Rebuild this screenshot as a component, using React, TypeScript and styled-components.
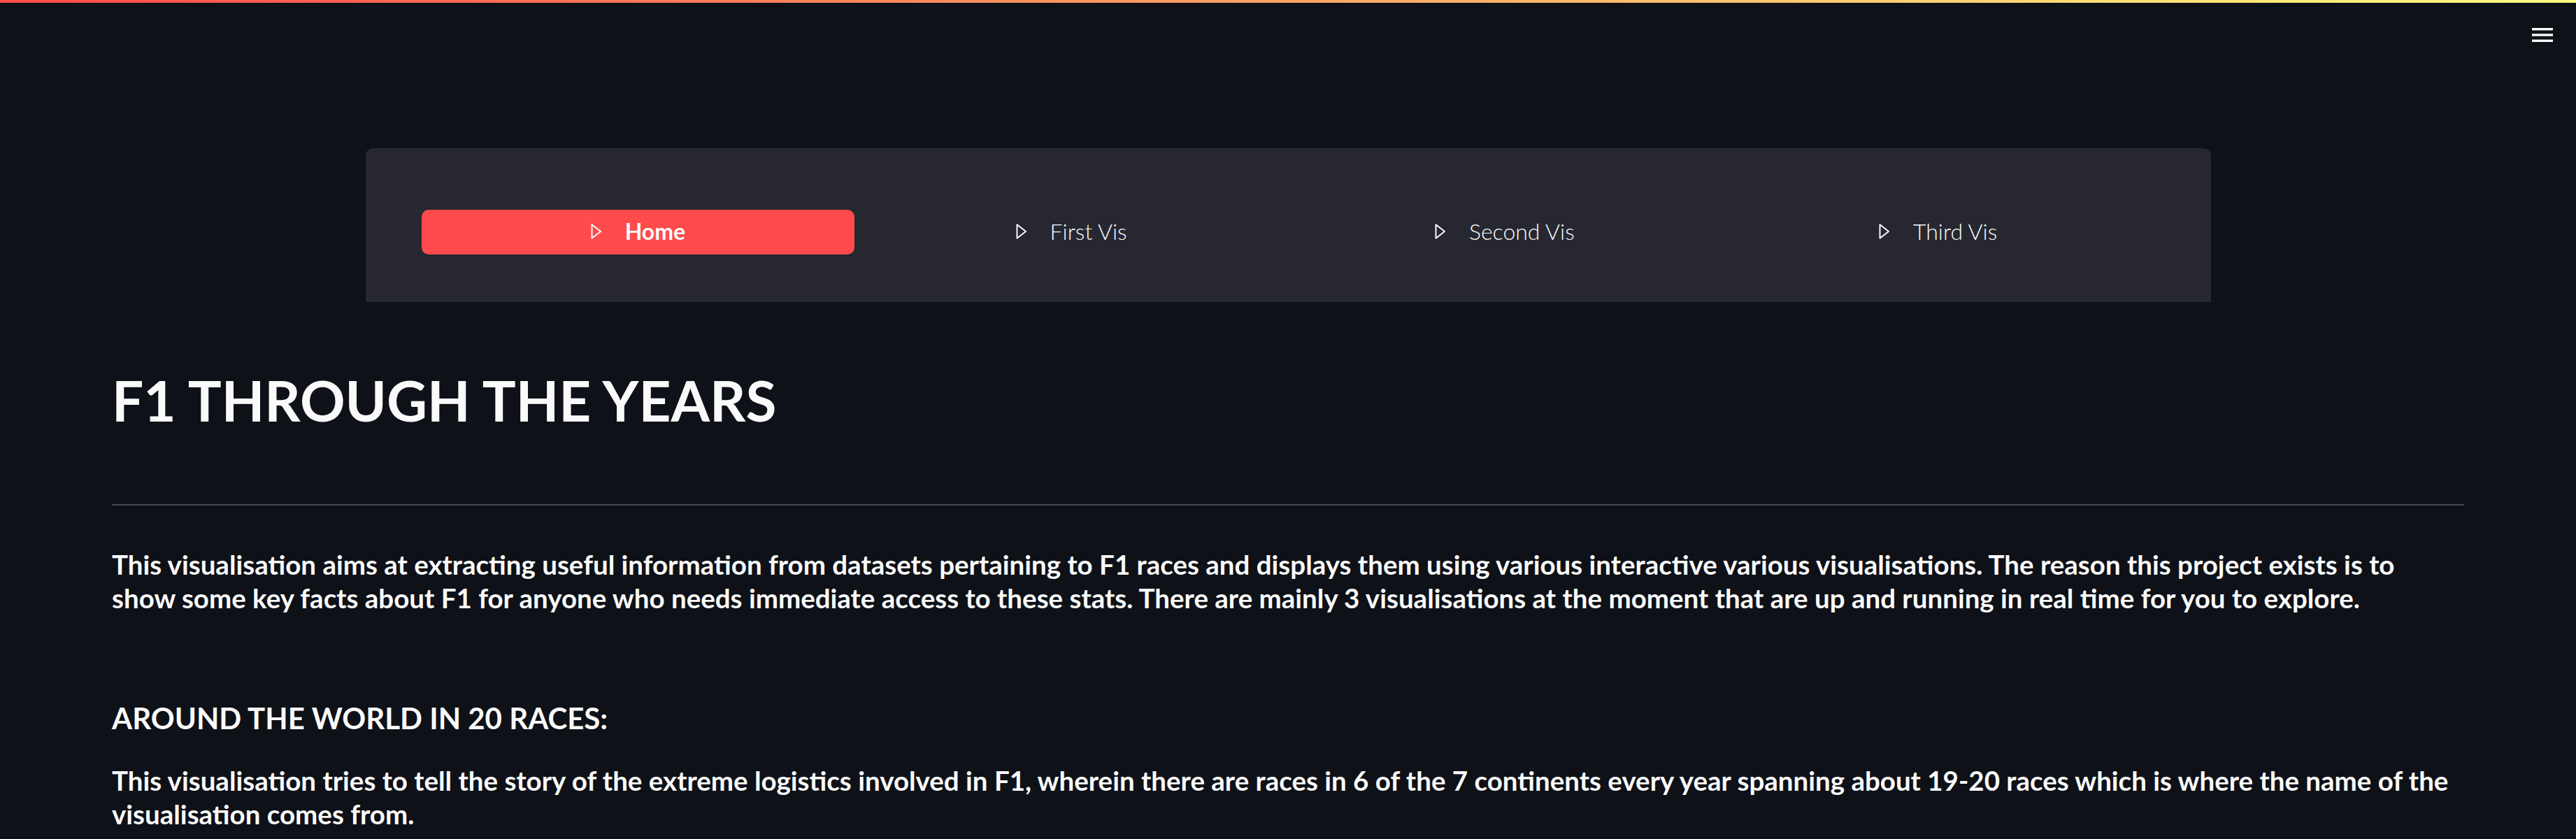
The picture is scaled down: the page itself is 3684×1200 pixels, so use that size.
import React from "react";
import styled, { createGlobalStyle } from "styled-components";

const GlobalStyle = createGlobalStyle`
  html, body {
    margin: 0;
    padding: 0;
    background: #0e1117;
  }
  * { box-sizing: border-box; }
`;

const Page = styled.div`
  min-height: 1200px;
  background: #0e1117;
  color: #fafafa;
  font-family: Lato, "Noto Sans", sans-serif;
`;

const DecorBar = styled.div`
  height: 4px;
  background: linear-gradient(90deg, rgb(255, 75, 75), rgb(255, 253, 128));
`;

const Header = styled.header`
  height: 96px;
  display: flex;
  justify-content: flex-end;
  align-items: flex-start;
  padding: 36px 33px 0 0;
`;

const MenuButton = styled.button`
  width: 30px;
  height: 20px;
  padding: 0;
  border: none;
  background: transparent;
  display: flex;
  cursor: pointer;
`;

const Main = styled.main`
  padding: 112px 160px 0;
`;

const Nav = styled.nav`
  width: 2639px;
  margin: 0 auto;
  background: #262730;
  border-radius: 10px 10px 0 0;
  padding: 88px 80px 68px;
  display: grid;
  grid-template-columns: repeat(4, 1fr);
`;

const NavItem = styled.a<{ $active?: boolean }>`
  height: 64px;
  border-radius: 10px;
  display: flex;
  align-items: center;
  justify-content: center;
  gap: 33px;
  padding-bottom: 3px;
  background: ${(p) => (p.$active ? "#ff4b4b" : "transparent")};
  color: #fafafa;
  font-size: 32px;
  font-weight: ${(p) => (p.$active ? 700 : 300)};
  text-decoration: none;
  cursor: pointer;
`;

const Title = styled.h1`
  margin: 92px 0 0;
  font-size: 80px;
  line-height: 1.2;
  font-weight: 700;
  color: #fafafa;
`;

const Divider = styled.hr`
  margin: 101px 0 0;
  border: none;
  height: 2px;
  background: #47484d;
`;

const Paragraph = styled.p<{ $gap: number }>`
  margin: ${(p) => p.$gap}px 0 0;
  font-size: 38.5px;
  line-height: 48px;
  font-weight: 700;
  color: #fafafa;
`;

const SectionHeading = styled.h3`
  margin: 123px 0 0;
  font-size: 42px;
  line-height: 1.2;
  font-weight: 700;
  color: #fafafa;
`;

const PlayIcon = () => (
  <svg width="16" height="24" viewBox="0 0 16 24" fill="none">
    <path
      d="M1.5 2.2 L14 12 L1.5 21.8 Z"
      stroke="#fafafa"
      strokeWidth="2"
      strokeLinejoin="round"
    />
  </svg>
);

const MenuIcon = () => (
  <svg width="30" height="20" viewBox="0 0 30 20">
    <rect x="0" y="0" width="30" height="3.4" fill="#fafafa" />
    <rect x="0" y="8.3" width="30" height="3.4" fill="#fafafa" />
    <rect x="0" y="16.6" width="30" height="3.4" fill="#fafafa" />
  </svg>
);

const items = ["Home", "First Vis", "Second Vis", "Third Vis"];

export default function App() {
  return (
    <>
      <GlobalStyle />
      <Page>
        <DecorBar />
        <Header>
          <MenuButton aria-label="menu">
            <MenuIcon />
          </MenuButton>
        </Header>
        <Main>
          <Nav>
            {items.map((label, i) => (
              <NavItem key={label} $active={i === 0}>
                <PlayIcon />
                <span>{label}</span>
              </NavItem>
            ))}
          </Nav>
          <Title>F1 THROUGH THE YEARS</Title>
          <Divider />
          <Paragraph $gap={60}>
            This visualisation aims at extracting useful information from datasets pertaining to F1 races and
            displays them using various interactive various visualisations. The reason this project exists is to
            <br />
            show some key facts about F1 for anyone who needs immediate access to these stats. There are mainly 3
            visualisations at the moment that are up and running in real time for you to explore.
          </Paragraph>
          <SectionHeading>AROUND THE WORLD IN 20 RACES:</SectionHeading>
          <Paragraph $gap={40}>
            This visualisation tries to tell the story of the extreme logistics involved in F1, wherein there are
            races in 6 of the 7 continents every year spanning about 19-20 races which is where the name of the
            <br />
            visualisation comes from.
          </Paragraph>
        </Main>
      </Page>
    </>
  );
}
